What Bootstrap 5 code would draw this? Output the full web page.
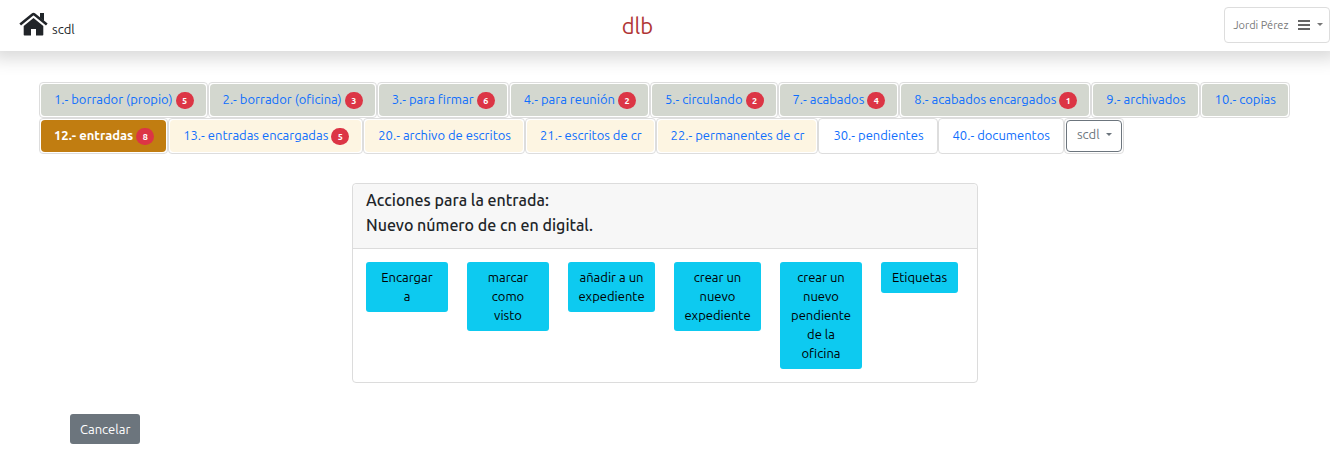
<!DOCTYPE html>
<html lang="es">
<head>
<meta charset="utf-8">
<meta name="viewport" content="width=device-width, initial-scale=1">
<title>dlb</title>
<link href="https://cdn.jsdelivr.net/npm/bootstrap@5.3.0/dist/css/bootstrap.min.css" rel="stylesheet">
<style>
body { font-family: Ubuntu, "Noto Sans", sans-serif; font-size: 13px; line-height: 19px; }
.topbar { height: 51px; box-shadow: 0 0 16px 8px rgba(0,0,0,.15); }
.home { color: #212529; padding-left: 19px; }
.home svg { margin-bottom: 3px; }
.brand { color: #b03535; font-size: 22px; line-height: 33px; }
.user-btn { height: 36px; padding: 2px 6px 0 8px; margin-bottom: 2px; font-size: 11px; color: #777; border: 1px solid #ddd; border-radius: 4px; background: #fff; }
.user-btn svg { margin: 0 1px 2px 7px; }
.tabs-area { padding: 31px 20px 0 39px; }
.tab { border: 1px solid #ddd; border-radius: 4px; padding: 1px; height: 36px; }
.tab .nav-link { padding: 5px 12px 7px 13px; height: 32px; line-height: 20px; color: #0d6efd; border-radius: 4px; white-space: nowrap; display: flex; align-items: center; gap: 3px; }
.local .nav-link { background: #d3d7cf; }
.inbox .nav-link { background: #fdf5e2; }
.tab .nav-link.active { background: #c17d11; color: #fff; font-weight: 700; }
.count { font-size: 9px; line-height: 9px; padding: 5px 0 3px; width: 18px; text-align: center; margin-top: 2px; }
.office { height: 32px; padding: 0 9px 2px 10px; font-size: 13px; border-radius: 4px; }
.office::after, .user-btn::after { border-top-width: 3px; border-left-width: 3px; border-right-width: 3px; margin-left: 6px; }
.office:not(:hover) { color: #6c757d; }
.panel { max-width: 626px; margin: 29px auto 0; border-color: #dcdcdc; border-radius: 4px; }
.panel .card-header { padding: 4px 13px 10px; background: #f7f7f7; border-color: #dcdcdc; }
.panel h1 { font-size: 16px; line-height: 25px; font-weight: 500; margin: 0; }
.panel .card-body { padding: 13px; gap: 19px; }
.act { flex: 0 0 82px; font-size: 13px; line-height: 19px; padding: 6px 0; border: 0; border-radius: 3px; color: #000; }
.act-wide { flex-basis: 87px; }
.act-short { flex-basis: 77px; }
.foot { padding: 31px 70px 0; }
.cancel { font-size: 13px; line-height: 20px; padding: 5px 10px; border: 0; border-radius: 3px; }
</style>
</head>
<body>
<header class="topbar d-flex justify-content-between align-items-center bg-white">
  <a class="home d-inline-flex align-items-end gap-1 text-decoration-none" href="#">
    <svg width="29" height="24" viewBox="0 -1 29 24" aria-hidden="true"><path d="M1.2 11.4 13.5 1.5q1-.8 2 0L27.8 11.4" fill="none" stroke="#212529" stroke-width="2.6"/><path d="M21 0h4v8l-4-3.2zM14.5 5 24.3 13V21.7q0 .8-.8.8H17V16h-5v6.500H5.500q-.8 0-.8-.8V13z" fill="#212529"/></svg>
    <span>scdl</span></a>
  <div class="brand me-4">dlb</div>
  <button type="button" class="btn user-btn dropdown-toggle" data-bs-toggle="dropdown">Jordi Pérez
    <svg width="12" height="12" viewBox="0 0 12 12" aria-hidden="true"><path d="M0 2h12M0 6h12M0 10h12" stroke="#666" stroke-width="2"/></svg></button>
</header>
<main>
<nav class="tabs-area">
  <ul class="nav local">
    <li class="tab"><a class="nav-link" href="#">1.- borrador (propio) <span class="badge rounded-pill bg-danger count">5</span></a></li>
    <li class="tab"><a class="nav-link" href="#">2.- borrador (oficina) <span class="badge rounded-pill bg-danger count">3</span></a></li>
    <li class="tab"><a class="nav-link" href="#">3.- para firmar <span class="badge rounded-pill bg-danger count">6</span></a></li>
    <li class="tab"><a class="nav-link" href="#">4.- para reunión <span class="badge rounded-pill bg-danger count">2</span></a></li>
    <li class="tab"><a class="nav-link" href="#">5.- circulando <span class="badge rounded-pill bg-danger count">2</span></a></li>
    <li class="tab"><a class="nav-link" href="#">7.- acabados <span class="badge rounded-pill bg-danger count">4</span></a></li>
    <li class="tab"><a class="nav-link" href="#">8.- acabados encargados <span class="badge rounded-pill bg-danger count">1</span></a></li>
    <li class="tab"><a class="nav-link" href="#">9.- archivados</a></li>
    <li class="tab"><a class="nav-link" href="#">10.- copias</a></li>
  </ul>
  <ul class="nav mb-0">
    <li class="tab inbox"><a class="nav-link active" href="#">12.- entradas <span class="badge rounded-pill bg-danger count">8</span></a></li>
    <li class="tab inbox"><a class="nav-link" href="#">13.- entradas encargadas <span class="badge rounded-pill bg-danger count">5</span></a></li>
    <li class="tab inbox"><a class="nav-link" href="#">20.- archivo de escritos</a></li>
    <li class="tab inbox"><a class="nav-link" href="#">21.- escritos de cr</a></li>
    <li class="tab inbox"><a class="nav-link" href="#">22.- permanentes de cr</a></li>
    <li class="tab"><a class="nav-link" href="#">30.- pendientes</a></li>
    <li class="tab"><a class="nav-link" href="#">40.- documentos</a></li>
    <li class="tab"><button type="button" class="btn btn-outline-secondary dropdown-toggle office" data-bs-toggle="dropdown">scdl</button></li>
  </ul>
</nav>
<section class="card panel">
  <div class="card-header"><h1>Acciones para la entrada:<br>Nuevo número de cn en digital.</h1></div>
  <div class="card-body d-flex align-items-start">
    <button type="button" class="btn btn-info act">Encargar<br>a</button>
    <button type="button" class="btn btn-info act">marcar<br>como<br>visto</button>
    <button type="button" class="btn btn-info act act-wide">añadir a un<br>expediente</button>
    <button type="button" class="btn btn-info act act-wide">crear un<br>nuevo<br>expediente</button>
    <button type="button" class="btn btn-info act">crear un<br>nuevo<br>pendiente<br>de la<br>oficina</button>
    <button type="button" class="btn btn-info act act-short">Etiquetas</button>
  </div>
</section>
<div class="foot"><button type="button" class="btn btn-secondary cancel">Cancelar</button></div>
</main>
<script src="https://cdn.jsdelivr.net/npm/bootstrap@5.3.0/dist/js/bootstrap.bundle.min.js"></script>
</body>
</html>
